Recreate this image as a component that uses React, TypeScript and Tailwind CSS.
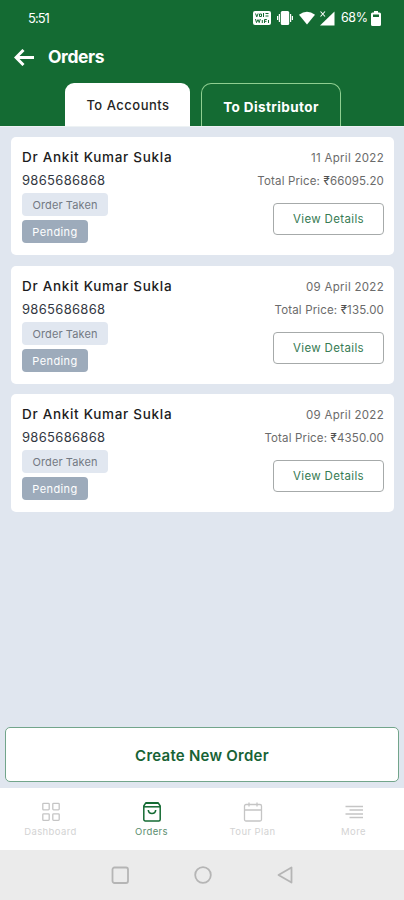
import type { ReactNode } from 'react';
import clsx from 'clsx';

type Order = {
  id: number;
  name: string;
  phone: string;
  date: string;
  total: string;
};

const orders: Order[] = [
  { id: 1, name: 'Dr Ankit Kumar Sukla', phone: '9865686868', date: '11 April 2022', total: '66095.20' },
  { id: 2, name: 'Dr Ankit Kumar Sukla', phone: '9865686868', date: '09 April 2022', total: '135.00' },
  { id: 3, name: 'Dr Ankit Kumar Sukla', phone: '9865686868', date: '09 April 2022', total: '4350.00' },
];

function StatusBar() {
  return (
    <div className="flex h-9 items-center justify-between pl-7 pr-[23px] text-white">
      <span className="pt-px text-[13px] tracking-[-1px]">5:51</span>
      <div className="flex items-center">
        <svg width="18" height="14" viewBox="0 0 18 14">
          <rect width="18" height="14" rx="2" fill="#fff" />
          <g fill="none" stroke="#146b33" strokeWidth="1">
            <path d="M2.5 2.5l1.3 3.4 1.3-3.4M6.5 3h2v2.5h-2zM10.5 2v4M12.5 2.5h3M12.5 5h3" />
            <path d="M2.5 8l1 3.6L5 8.6l1.2 3L7.3 8M9.3 9v3M11.5 12V8.5h2.3M11.5 10.3h2M15.5 9v3" />
          </g>
        </svg>
        <svg className="ml-[6px]" width="16" height="14" viewBox="0 0 16 14" fill="#fff">
          <rect x="3.8" width="8.4" height="14" rx="1.5" />
          <path d="M1.8 3H3v8H1.8zM0 5h1.2v4H0zM13 3h1.2v8H13zM14.8 5H16v4h-1.2z" />
        </svg>
        <svg className="ml-[6px]" width="16" height="14" viewBox="0 0 17 14" fill="#fff">
          <path d="M0 3.6Q8.5-3 17 3.6L8.5 14z" />
        </svg>
        <svg className="ml-1" width="16" height="15" viewBox="0 0 16 15" fill="#fff">
          <path d="M15.5.5v14H1z" />
          <path d="M1.5.5l4.5 5M6 .5l-4.5 5" stroke="#fff" strokeWidth="1.1" />
        </svg>
        <span className="ml-[6px] w-[26px] pt-px text-[12.5px] tracking-[-0.4px]">68%</span>
        <svg className="ml-1" width="10" height="15" viewBox="0 0 10 15">
          <path d="M3 0h4v1.5h1.5A1.5 1.5 0 0110 3v10.5A1.5 1.5 0 018.5 15h-7A1.5 1.5 0 010 13.5V3a1.5 1.5 0 011.5-1.5H3z" fill="#fff" />
          <path d="M2 3.5h6V6H2z" fill="#146b33" />
        </svg>
      </div>
    </div>
  );
}

function Header() {
  return (
    <header className="h-[126px] shrink-0 bg-[#146b33]">
      <StatusBar />
      <div className="flex h-[47px] items-center pl-[14px] pb-[5px] text-white">
        <svg width="21" height="17" viewBox="0 0 21 17" fill="none" stroke="#fff" strokeWidth="3">
          <path d="M9.5 1L2 8.5 9.5 16M2.5 8.5H20" />
        </svg>
        <h1 className="ml-[13px] pt-px text-[17.5px] font-bold tracking-[-0.4px]">Orders</h1>
      </div>
      <div className="flex h-[43px] justify-center gap-[11px] pl-[2px]">
        <button className="w-[125px] rounded-t-[9px] bg-white pt-[3px] pl-px text-[13px] font-medium tracking-[0.5px] text-[#252525]">
          To Accounts
        </button>
        <button className="w-[140px] rounded-t-[10px] border border-b-0 border-[#8fcf91] pt-[4px] text-[13.5px] font-bold tracking-[0.4px] text-white">
          To Distributor
        </button>
      </div>
    </header>
  );
}

function OrderCard({ order }: { order: Order }) {
  return (
    <article className="flex h-[118px] justify-between rounded-[5px] bg-white pl-[11px] pr-[10px] pt-[11px]">
      <div className="flex flex-col items-start">
        <h2 className="h-[23px] text-[13.5px] font-medium leading-[18px] tracking-[0.7px] text-[#1c1c1c]">{order.name}</h2>
        <p className="h-[22px] text-[13px] leading-[19px] tracking-[0.3px] text-[#333842]">{order.phone}</p>
        <span className="h-[23px] w-[86px] rounded-[4px] bg-[#e1e7f0] text-center text-[11px] leading-[24px] tracking-[0.1px] text-[#737983]">
          Order Taken
        </span>
        <span className="mt-1 h-[23px] w-[66px] rounded-[4px] bg-[#9dabbb] text-center text-[11px] leading-[24px] tracking-[0.4px] text-white">
          Pending
        </span>
      </div>
      <div className="flex flex-col items-end">
        <p className="h-[23px] text-[11.5px] leading-[21px] tracking-[0.3px] text-[#6b6b6b]">{order.date}</p>
        <p className="h-[32px] text-[11.5px] leading-[21px] tracking-[0.15px] text-[#6b6b6b]">
          Total Price: <span className="text-[#505050]">₹</span>{order.total}
        </p>
        <button className="h-[32px] w-[111px] rounded-[4px] border border-[#a6aaaa] pt-[2px] text-[11.5px] tracking-[0.35px] text-[#377b54]">
          View Details
        </button>
      </div>
    </article>
  );
}

function NavItem({ label, active, children }: { label: string; active?: boolean; children: ReactNode }) {
  return (
    <div className={clsx('flex w-[101px] flex-col items-center pt-[13px]', active ? 'text-[#146b33]' : 'text-[#c5c5c5]')}>
      <svg width="20" height="22" viewBox="0 0 20 22" fill="none" stroke="currentColor" strokeLinejoin="round">
        {children}
      </svg>
      <span className={clsx('mt-[2px] text-[9.5px] leading-[14px] tracking-[0.4px]', active ? 'text-[#5c8e6f]' : 'text-[#d3d3d3]')}>
        {label}
      </span>
    </div>
  );
}

function BottomNav() {
  return (
    <nav className="flex h-[62px] shrink-0 bg-white">
      <NavItem label="Dashboard">
        <g strokeWidth="1.3">
          <rect x="1.8" y="2.3" width="6.4" height="6.6" rx="0.8" />
          <rect x="11.8" y="2.3" width="6.4" height="6.6" rx="0.8" />
          <rect x="1.8" y="12.8" width="6.4" height="6.6" rx="0.8" />
          <rect x="11.8" y="12.8" width="6.4" height="6.6" rx="0.8" />
        </g>
      </NavItem>
      <NavItem label="Orders" active>
        <path d="M3.8 1.8h12.4L18.2 5v13.5a1.5 1.5 0 01-1.5 1.5H3.3a1.5 1.5 0 01-1.5-1.5V5z" strokeWidth="1.5" />
        <path d="M2 5.8h16" strokeWidth="1.5" />
        <path d="M4 2h12" strokeWidth="2" />
        <path d="M6.3 9c.4 4.6 7 4.6 7.4 0" strokeWidth="1.6" />
      </NavItem>
      <NavItem label="Tour Plan">
        <rect x="1.5" y="3.5" width="17" height="16.5" rx="1.5" strokeWidth="1.3" />
        <path d="M2 9h16M6 1.5v4M14 1.5v4" strokeWidth="1.3" />
      </NavItem>
      <NavItem label="More">
        <path d="M1.5 5.5H19M5.5 9H19M1.5 13H19M5.5 16.5H19" strokeWidth="1.3" />
      </NavItem>
    </nav>
  );
}

function SystemNav() {
  return (
    <div className="flex h-[50px] shrink-0 items-center justify-center gap-[65px] bg-[#ebebeb]">
      <svg width="18" height="18" viewBox="0 0 18 18" fill="none" stroke="#b5b5b5" strokeWidth="1.8">
        <rect x="1.5" y="1.5" width="15.5" height="15.5" rx="2" />
      </svg>
      <svg width="18" height="18" viewBox="0 0 18 18" fill="none" stroke="#b5b5b5" strokeWidth="1.8">
        <circle cx="9" cy="9" r="7.8" />
      </svg>
      <svg width="16" height="18" viewBox="0 0 16 18" fill="none" stroke="#b5b5b5" strokeWidth="1.8" strokeLinejoin="round">
        <path d="M1.5 9L14.5 1.5v15z" />
      </svg>
    </div>
  );
}

export default function App() {
  return (
    <div className="flex h-[900px] w-[404px] flex-col bg-[#e0e6ef] font-['Inter','Noto_Sans',sans-serif]">
      <Header />
      <main className="flex grow flex-col justify-between border-t border-[#edf2f4] px-[5px] pb-[6px] pt-[10px]">
        <div className="flex flex-col gap-[10.5px] pl-[6px] pr-[5px]">
          {orders.map((order) => (
            <OrderCard key={order.id} order={order} />
          ))}
        </div>
        <button className="h-[55px] rounded-[5px] border border-[#72a58b] bg-white pt-[3px] text-[15px] font-semibold tracking-[0.25px] text-[#176335]">
          Create New Order
        </button>
      </main>
      <BottomNav />
      <SystemNav />
    </div>
  );
}
